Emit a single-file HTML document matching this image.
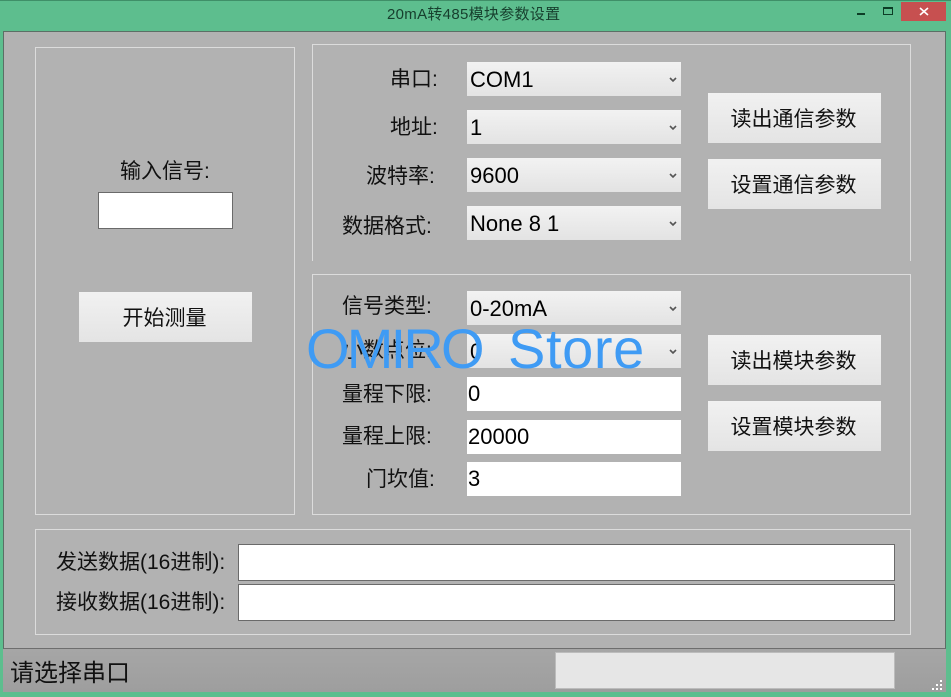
<!DOCTYPE html>
<html><head><meta charset="utf-8">
<style>
html,body{margin:0;padding:0;width:951px;height:697px;overflow:hidden;background:#5dbe8e}
body{position:relative;font-family:"Liberation Sans","Noto Sans CJK SC",sans-serif;color:#111}
div{position:absolute;box-sizing:border-box}
.t{white-space:nowrap;font-size:21px;line-height:28px;height:28px}
.gb{border:1px solid #dcdcdc}
.btn{width:173px;height:50px;background:linear-gradient(#f1f1f1,#e4e4e4);text-align:center;text-indent:-2px;font-size:21px;line-height:53px;white-space:nowrap;color:#111}
.sel{left:467px;width:214px;height:34px;background:linear-gradient(#f2f2f2,#e3e3e3);font-size:22px;line-height:36px;padding-left:3px;color:#000}
.sel svg{position:absolute;left:202px;top:15px}
.inp{background:#fff;border:1px solid #6a6a6a}
.in2{left:467px;width:214px;height:34px;background:#fff;font-size:22px;line-height:33px;padding-left:1px;color:#000}
</style></head><body>
<div style="left:0;top:0;width:951px;height:1px;background:#3f8f68"></div>
<div class="t" style="left:387px;top:5px;font-size:15px;line-height:20px;height:20px;color:#17402e;letter-spacing:.3px">20mA转485模块参数设置</div>
<div style="left:857px;top:13px;width:8px;height:2px;background:#0d3d26"></div>
<div style="left:883px;top:7px;width:10px;height:8px;border:1px solid #0d3d26;border-top-width:2px"></div>
<div style="left:901px;top:2px;width:45px;height:19px;background:#c75050"></div>
<svg style="position:absolute;left:919px;top:7px" width="10" height="9"><path d="M1 1L9 8M9 1L1 8" stroke="#fff" stroke-width="1.6"/></svg>

<div style="left:3px;top:31px;width:943px;height:618px;background:#b2b2b2;border:1px solid #5c6f66;border-bottom-color:#6e6e6e"></div>

<div class="gb" style="left:35px;top:47px;width:260px;height:468px"></div>
<div class="gb" style="left:312px;top:44px;width:599px;height:217px;border-bottom:none"></div>
<div class="gb" style="left:312px;top:274px;width:599px;height:241px"></div>
<div class="gb" style="left:35px;top:529px;width:876px;height:106px"></div>

<div class="t" style="left:120px;top:158px">输入信号:</div>
<div class="inp" style="left:98px;top:192px;width:135px;height:37px"></div>
<div class="btn" style="left:79px;top:292px">开始测量</div>

<div class="t" style="left:390px;top:66px">串口:</div>
<div class="t" style="left:390px;top:114px">地址:</div>
<div class="t" style="left:366px;top:163px">波特率:</div>
<div class="t" style="left:342px;top:213px">数据格式:</div>

<div class="sel" style="top:62px">COM1<svg width="8" height="6"><path d="M1 1L4 4L7 1" fill="none" stroke="#555" stroke-width="1.6"/></svg></div>
<div class="sel" style="top:110px">1<svg width="8" height="6"><path d="M1 1L4 4L7 1" fill="none" stroke="#555" stroke-width="1.6"/></svg></div>
<div class="sel" style="top:158px">9600<svg width="8" height="6"><path d="M1 1L4 4L7 1" fill="none" stroke="#555" stroke-width="1.6"/></svg></div>
<div class="sel" style="top:206px">None 8 1<svg width="8" height="6"><path d="M1 1L4 4L7 1" fill="none" stroke="#555" stroke-width="1.6"/></svg></div>

<div class="btn" style="left:708px;top:93px">读出通信参数</div>
<div class="btn" style="left:708px;top:159px">设置通信参数</div>

<div class="t" style="left:342px;top:293px">信号类型:</div>
<div class="t" style="left:342px;top:337px">小数点位:</div>
<div class="t" style="left:342px;top:381px">量程下限:</div>
<div class="t" style="left:342px;top:423px">量程上限:</div>
<div class="t" style="left:366px;top:466px">门坎值:</div>

<div class="sel" style="top:291px">0-20mA<svg width="8" height="6"><path d="M1 1L4 4L7 1" fill="none" stroke="#555" stroke-width="1.6"/></svg></div>
<div class="sel" style="top:334px">0<svg width="8" height="6"><path d="M1 1L4 4L7 1" fill="none" stroke="#555" stroke-width="1.6"/></svg></div>
<div class="in2" style="top:377px">0</div>
<div class="in2" style="top:420px">20000</div>
<div class="in2" style="top:462px">3</div>

<div class="btn" style="left:708px;top:335px">读出模块参数</div>
<div class="btn" style="left:708px;top:401px">设置模块参数</div>

<div class="t" style="left:56px;top:549px">发送数据(16进制):</div>
<div class="t" style="left:56px;top:589px">接收数据(16进制):</div>
<div class="inp" style="left:238px;top:544px;width:657px;height:37px"></div>
<div class="inp" style="left:238px;top:584px;width:657px;height:37px"></div>

<div style="left:3px;top:649px;width:943px;height:43px;background:linear-gradient(#a6a6a6,#9e9e9e)"></div>
<div class="t" style="left:10px;top:658px;font-size:24px;line-height:32px;height:32px">请选择串口</div>
<div style="left:555px;top:652px;width:340px;height:37px;background:#e6e6e6;border:1px solid #bcbcbc"></div>
<svg style="position:absolute;left:932px;top:679px" width="12" height="12"><path d="M8 1h2v2h-2zM4 5h2v2h-2zM8 5h2v2h-2zM0 9h2v2h-2zM4 9h2v2h-2zM8 9h2v2h-2z" fill="#ffffff"/></svg>

<div class="t" style="left:306px;top:315px;font-size:56px;line-height:68px;height:68px;color:#3f9bf4;letter-spacing:-2.8px">OMIRO</div>
<div class="t" style="left:508px;top:315px;font-size:56px;line-height:68px;height:68px;color:#3f9bf4;letter-spacing:.6px">Store</div>
</body></html>
